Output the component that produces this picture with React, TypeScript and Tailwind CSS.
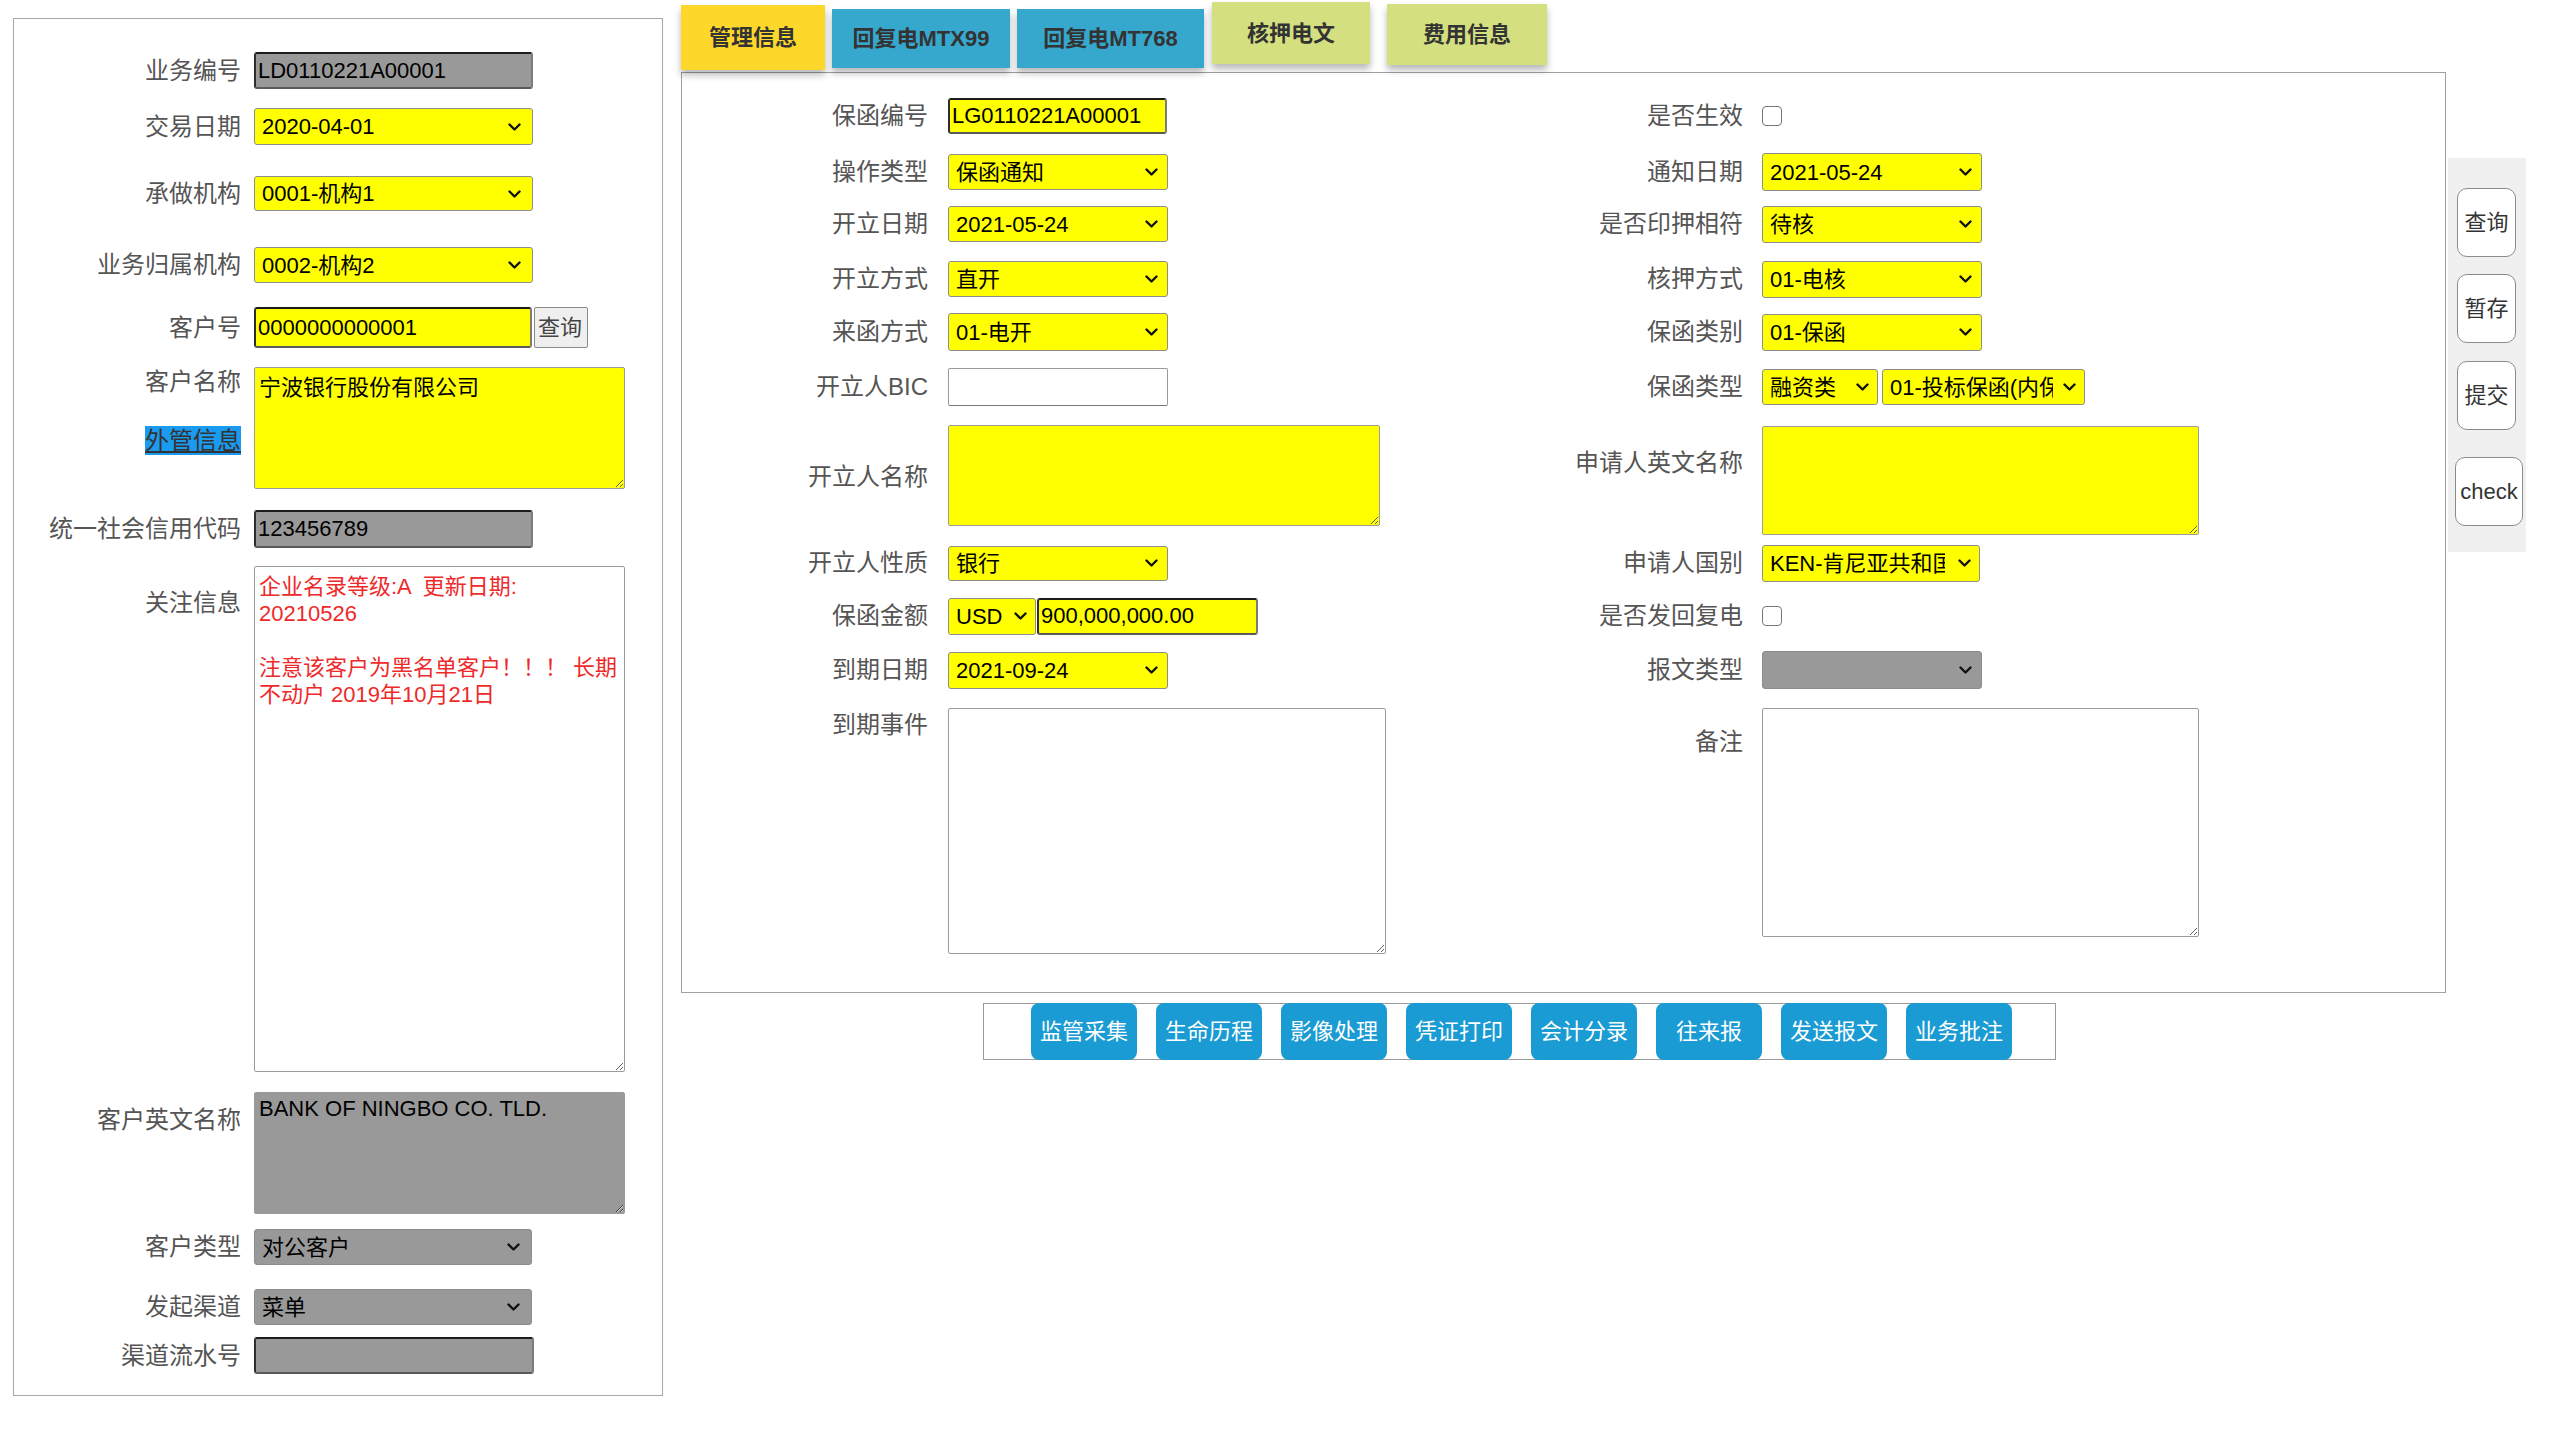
import React from "react";

type BoxProps = { box: string; bg?: string };

function Chevron({ pos = "right-[12px]" }: { pos?: string }) {
  return (
    <svg
      width="13"
      height="8"
      viewBox="0 0 13 8"
      className={`pointer-events-none absolute top-1/2 -translate-y-1/2 ${pos}`}
    >
      <path d="M1.5 1.5 L6.5 6.5 L11.5 1.5" fill="none" stroke="#111" strokeWidth="2.4" strokeLinecap="round" strokeLinejoin="round" />
    </svg>
  );
}

function Select({
  value,
  box,
  bg = "bg-[#ffff00]",
  arrow,
  pad = "pr-[26px]",
}: BoxProps & { value: string; arrow?: string; pad?: string }) {
  return (
    <div className={`relative shrink-0 ${box}`}>
      <select
        value={value}
        onChange={() => {}}
        className={`h-full w-full appearance-none overflow-hidden whitespace-nowrap rounded-[3px] border border-[#8d8d8d] pl-[7px] text-[22px] text-black outline-none ${pad} ${bg}`}
      >
        <option value={value}>{value}</option>
      </select>
      <Chevron pos={arrow} />
    </div>
  );
}

function Field({ value, box, bg = "bg-[#ffff00]" }: BoxProps & { value: string }) {
  return (
    <input
      readOnly
      value={value}
      className={`shrink-0 rounded-[3px] border-2 border-t-[#1c1c1c] border-l-[#2e2e2e] border-b-[#5a5a5a] border-r-[#7c7c7c] px-[2px] text-[22px] text-black outline-none ${bg} ${box}`}
    />
  );
}

function Area({ value = "", box, bg = "bg-white", extra = "" }: BoxProps & { value?: string; extra?: string }) {
  return (
    <textarea
      readOnly
      value={value}
      wrap="off"
      className={`block shrink-0 resize overflow-hidden rounded-[2px] border border-[#9b9b9b] px-[4px] text-[22px] leading-[26px] text-black outline-none ${bg} ${box} ${extra}`}
    />
  );
}

function Check() {
  return (
    <input
      type="checkbox"
      readOnly
      className="h-[20px] w-[20px] appearance-none rounded-[4px] border border-[#777] bg-white"
    />
  );
}

function LRow({ label, className = "", children }: { label: string; className?: string; children: React.ReactNode }) {
  return (
    <div className={`flex items-center ${className}`}>
      <div className="w-[227px] shrink-0 text-right text-[24px] leading-[28px]">{label}</div>
      <div className="ml-[13px] flex items-center">{children}</div>
    </div>
  );
}

function MRow({
  h,
  l1,
  c1,
  l2,
  c2,
}: {
  h: string;
  l1: string;
  c1: React.ReactNode;
  l2: string;
  c2: React.ReactNode;
}) {
  return (
    <div className={`flex items-center ${h}`}>
      <div className="w-[266px] shrink-0 pr-[20px] text-right text-[24px] leading-[28px]">{l1}</div>
      <div className="flex w-[548px] shrink-0 items-center">{c1}</div>
      <div className="w-[266px] shrink-0 pr-[19px] text-right text-[24px] leading-[28px]">{l2}</div>
      <div className="flex items-center gap-[4px]">{c2}</div>
    </div>
  );
}

const tabs = [
  { t: "管理信息", c: "ml-0 mt-[5px] h-[65px] w-[144px] bg-[#fdd82b]" },
  { t: "回复电MTX99", c: "ml-[7px] mt-[9px] h-[59px] w-[178px] bg-[#36a8cd]" },
  { t: "回复电MT768", c: "ml-[7px] mt-[9px] h-[59px] w-[187px] bg-[#36a8cd]" },
  { t: "核押电文", c: "ml-[8px] mt-[2px] h-[62px] w-[158px] bg-[#d4e07f]" },
  { t: "费用信息", c: "ml-[17px] mt-[4px] h-[61px] w-[160px] bg-[#d4e07f]" },
];

const actions = ["监管采集", "生命历程", "影像处理", "凭证打印", "会计分录", "往来报", "发送报文", "业务批注"];

const side = [
  { t: "查询", c: "ml-[9px] mt-[30px] w-[59px]" },
  { t: "暂存", c: "ml-[9px] mt-[17px] w-[59px]" },
  { t: "提交", c: "ml-[9px] mt-[18px] w-[59px]" },
  { t: "check", c: "ml-[7px] mt-[27px] w-[68px]" },
];

export default function App() {
  return (
    <div className="flex min-h-[1431px] w-[2560px] items-start bg-white font-['Liberation_Sans','Noto_Sans_CJK_SC',sans-serif] text-[#555]">
      {/* 左侧客户信息 */}
      <div className="ml-[13px] mt-[18px] h-[1378px] w-[650px] shrink-0 border border-[#a8a8a8] pt-[33px]">
        <LRow label="业务编号">
          <Field value="LD0110221A00001" box="h-[37px] w-[279px]" bg="bg-[#999999]" />
        </LRow>
        <LRow label="交易日期" className="mt-[19px]">
          <Select value="2020-04-01" box="h-[37px] w-[279px]" arrow="right-[12px]" />
        </LRow>
        <LRow label="承做机构" className="mt-[31px]">
          <Select value="0001-机构1" box="h-[35px] w-[279px]" arrow="right-[12px]" />
        </LRow>
        <LRow label="业务归属机构" className="mt-[36px]">
          <Select value="0002-机构2" box="h-[36px] w-[279px]" arrow="right-[12px]" />
        </LRow>
        <LRow label="客户号" className="mt-[24px]">
          <Field value="0000000000001" box="h-[41px] w-[278px]" />
          <button className="ml-[2px] h-[41px] w-[54px] rounded-[2px] border border-[#8a8a8a] bg-[#efefef] px-[3px] text-left text-[22px] text-[#444]">
            查询
          </button>
        </LRow>
        <div className="mt-[19px] flex items-start">
          <div className="flex w-[227px] shrink-0 flex-col items-end text-[24px] leading-[28px]">
            <span className="mt-[1px]">客户名称</span>
            <span className="mt-[30px] bg-[#1b9bf0] leading-[29px] text-[#333] underline">外管信息</span>
          </div>
          <div className="ml-[13px]">
            <Area value="宁波银行股份有限公司" box="h-[122px] w-[371px]" bg="bg-[#ffff00]" extra="pt-[7px]" />
          </div>
        </div>
        <LRow label="统一社会信用代码" className="mt-[21px]">
          <Field value="123456789" box="h-[38px] w-[279px]" bg="bg-[#999999]" />
        </LRow>
        <div className="mt-[18px] flex items-start">
          <div className="mt-[23px] w-[227px] shrink-0 text-right text-[24px] leading-[28px]">关注信息</div>
          <div className="ml-[13px]">
            <Area
              value={"企业名录等级:A  更新日期:\n20210526\n\n注意该客户为黑名单客户！！！ 长期\n不动户 2019年10月21日"}
              box="h-[506px] w-[371px]"
              extra="pt-[6px] !text-[#ee2a2a] leading-[27px]"
            />
          </div>
        </div>
        <div className="mt-[20px] flex items-start">
          <div className="mt-[14px] w-[227px] shrink-0 text-right text-[24px] leading-[28px]">客户英文名称</div>
          <div className="ml-[13px]">
            <Area value="BANK OF NINGBO CO. TLD." box="h-[122px] w-[371px]" bg="bg-[#999999]" extra="pt-[3px]" />
          </div>
        </div>
        <LRow label="客户类型" className="mt-[15px]">
          <Select value="对公客户" box="h-[36px] w-[278px]" bg="bg-[#999999]" arrow="right-[12px]" />
        </LRow>
        <LRow label="发起渠道" className="mt-[24px]">
          <Select value="菜单" box="h-[36px] w-[278px]" bg="bg-[#999999]" arrow="right-[12px]" />
        </LRow>
        <LRow label="渠道流水号" className="mt-[12px]">
          <Field value="" box="h-[37px] w-[280px]" bg="bg-[#999999]" />
        </LRow>
      </div>

      {/* 中间主区域 */}
      <div className="ml-[18px] flex w-[1765px] shrink-0 flex-col">
        <div className="flex h-[72px] items-start">
          {tabs.map((tab) => (
            <div
              key={tab.t}
              className={`relative z-10 flex shrink-0 items-center justify-center text-[22px] font-bold text-[#333] shadow-[0_5px_7px_rgba(0,0,0,0.28)] ${tab.c}`}
            >
              {tab.t}
            </div>
          ))}
        </div>

        <div className="border border-[#a0a0a0] pb-[38px] pt-[15px]">
          <MRow
            h="h-[56px]"
            l1="保函编号"
            c1={<Field value="LG0110221A00001" box="h-[36px] w-[219px]" />}
            l2="是否生效"
            c2={<Check />}
          />
          <MRow
            h="h-[56px]"
            l1="操作类型"
            c1={<Select value="保函通知" box="h-[36px] w-[220px]" arrow="right-[10px]" />}
            l2="通知日期"
            c2={<Select value="2021-05-24" box="h-[38px] w-[220px]" arrow="right-[10px]" />}
          />
          <MRow
            h="h-[48px]"
            l1="开立日期"
            c1={<Select value="2021-05-24" box="h-[36px] w-[220px]" arrow="right-[10px]" />}
            l2="是否印押相符"
            c2={<Select value="待核" box="h-[37px] w-[220px]" arrow="right-[10px]" />}
          />
          <MRow
            h="h-[62px]"
            l1="开立方式"
            c1={<Select value="直开" box="h-[36px] w-[220px]" arrow="right-[10px]" />}
            l2="核押方式"
            c2={<Select value="01-电核" box="h-[37px] w-[220px]" arrow="right-[10px]" />}
          />
          <MRow
            h="h-[44px]"
            l1="来函方式"
            c1={<Select value="01-电开" box="h-[38px] w-[220px]" arrow="right-[10px]" />}
            l2="保函类别"
            c2={<Select value="01-保函" box="h-[37px] w-[220px]" arrow="right-[10px]" />}
          />
          <MRow
            h="h-[66px]"
            l1="开立人BIC"
            c1={
              <input
                readOnly
                value=""
                className="h-[38px] w-[220px] rounded-[2px] border border-[#9a9a9a] border-b-[#777] bg-white px-[3px] text-[22px] outline-none"
              />
            }
            l2="保函类型"
            c2={
              <>
                <Select value="融资类" box="h-[36px] w-[116px]" arrow="right-[9px]" />
                <Select value="01-投标保函(内保)" box="h-[36px] w-[203px]" arrow="right-[9px]" pad="pr-[31px]" />
              </>
            }
          />
          <div className="flex h-[114px] items-start">
            <div className="mt-[43px] w-[266px] shrink-0 pr-[20px] text-right text-[24px] leading-[28px]">开立人名称</div>
            <div className="mt-[5px] w-[548px] shrink-0">
              <Area box="h-[101px] w-[432px]" bg="bg-[#ffff00]" />
            </div>
            <div className="mt-[29px] w-[266px] shrink-0 pr-[19px] text-right text-[24px] leading-[28px]">申请人英文名称</div>
            <div className="mt-[6px]">
              <Area box="h-[109px] w-[437px]" bg="bg-[#ffff00]" />
            </div>
          </div>
          <MRow
            h="h-[58px]"
            l1="开立人性质"
            c1={<Select value="银行" box="h-[35px] w-[220px]" arrow="right-[10px]" />}
            l2="申请人国别"
            c2={<Select value="KEN-肯尼亚共和国" box="h-[37px] w-[218px]" arrow="right-[9px]" pad="pr-[34px]" />}
          />
          <MRow
            h="h-[48px]"
            l1="保函金额"
            c1={
              <>
                <Select value="USD" box="h-[37px] w-[88px]" arrow="right-[9px]" />
                <Field value="900,000,000.00" box="ml-[1px] h-[37px] w-[221px]" />
              </>
            }
            l2="是否发回复电"
            c2={<Check />}
          />
          <MRow
            h="h-[60px]"
            l1="到期日期"
            c1={<Select value="2021-09-24" box="h-[37px] w-[220px]" arrow="right-[10px]" />}
            l2="报文类型"
            c2={<Select value="" box="h-[38px] w-[220px]" bg="bg-[#999999]" arrow="right-[10px]" />}
          />
          <div className="mt-[8px] flex items-start">
            <div className="mt-[3px] w-[266px] shrink-0 pr-[20px] text-right text-[24px] leading-[28px]">到期事件</div>
            <div className="w-[548px] shrink-0">
              <Area box="h-[246px] w-[438px]" />
            </div>
            <div className="mt-[20px] w-[266px] shrink-0 pr-[19px] text-right text-[24px] leading-[28px]">备注</div>
            <div>
              <Area box="h-[229px] w-[437px]" />
            </div>
          </div>
        </div>

        <div className="ml-[302px] mt-[10px] flex h-[57px] w-[1073px] items-center gap-[19px] border border-[#9a9a9a] pl-[47px]">
          {actions.map((a) => (
            <button
              key={a}
              className="-my-px h-[57px] w-[106px] shrink-0 rounded-[8px] bg-[#1a9bd3] text-[22px] text-white"
            >
              {a}
            </button>
          ))}
        </div>
      </div>

      {/* 右侧悬浮按钮 */}
      <div className="ml-[2px] mt-[158px] flex h-[394px] w-[78px] shrink-0 flex-col items-start bg-[#f0f0f0]">
        {side.map((s) => (
          <button
            key={s.t}
            className={`flex h-[69px] shrink-0 items-center justify-center rounded-[10px] border border-[#8c8c8c] bg-white text-[22px] text-[#333] ${s.c}`}
          >
            {s.t}
          </button>
        ))}
      </div>
    </div>
  );
}
